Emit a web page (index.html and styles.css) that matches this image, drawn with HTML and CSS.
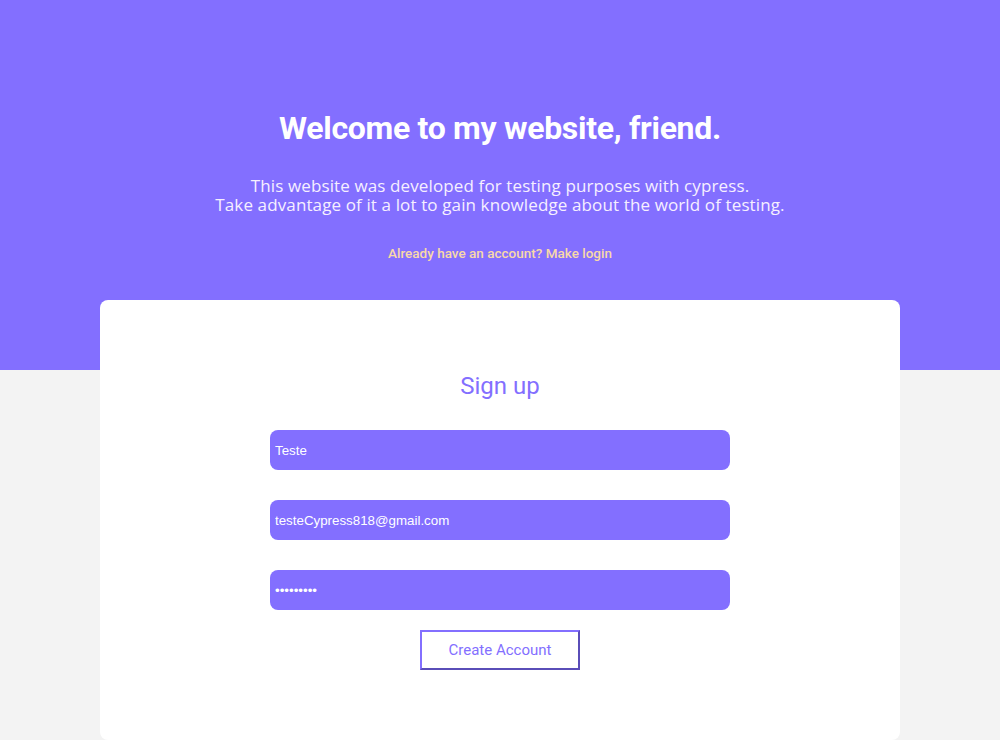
FILE: index.html
```html
<!DOCTYPE html>
<html lang="en">
<head>
<meta charset="utf-8">
<title>Sign up</title>
<link rel="stylesheet" href="styles.css">
</head>
<body>
<header class="hero">
  <h1 class="hero-title">Welcome to my website, friend.</h1>
  <p class="hero-text">This website was developed for testing purposes with cypress.<br>Take advantage of it a lot to gain knowledge about the world of testing.</p>
  <a class="hero-link" href="#">Already have an account? Make login</a>
</header>
<main class="card">
  <h2 class="card-title">Sign up</h2>
  <form class="form">
    <input class="field" type="text" value="Teste">
    <input class="field" type="email" value="testeCypress818@gmail.com">
    <input class="field" type="password" value="123456789">
    <button class="btn" type="button">Create Account</button>
  </form>
</main>
</body>
</html>
```
FILE: styles.css
```css
html, body {
  margin: 0;
  padding: 0;
}
body {
  background: #f3f3f3;
  font-family: Roboto, "Liberation Sans", sans-serif;
}
.hero {
  background: #836fff;
  height: 370px;
  box-sizing: border-box;
  padding-top: 109px;
  display: flex;
  flex-direction: column;
  align-items: center;
  text-align: center;
}
.hero-title {
  margin: 0;
  font-family: Roboto, sans-serif;
  font-weight: 700;
  font-size: 32px;
  line-height: 38px;
  color: #ffffff;
  letter-spacing: -0.3px;
}
.hero-text {
  margin: 29px 0 0;
  font-family: "Open Sans", sans-serif;
  font-size: 17px;
  line-height: 19px;
  letter-spacing: 0.12px;
  color: #f6efff;
}
.hero-link {
  margin-top: 31px;
  font-family: Roboto, sans-serif;
  font-weight: 500;
  font-size: 13.5px;
  line-height: 16px;
  color: #f8d9a8;
  text-decoration: none;
}
.card {
  width: 800px;
  height: 440px;
  box-sizing: border-box;
  margin: -70px auto 0;
  background: #ffffff;
  border-radius: 8px;
  padding-top: 72px;
  display: flex;
  flex-direction: column;
  align-items: center;
}
.card-title {
  margin: 0;
  font-family: Roboto, sans-serif;
  font-weight: 400;
  font-size: 24px;
  line-height: 28px;
  color: #836fff;
}
.form {
  margin-top: 30px;
  display: flex;
  flex-direction: column;
  align-items: center;
  gap: 30px;
}
.field {
  width: 460px;
  height: 40px;
  box-sizing: border-box;
  border: none;
  border-radius: 8px;
  background: #836fff;
  color: #ffffff;
  font-family: Arial, "Liberation Sans", sans-serif;
  font-size: 13.3333px;
  padding: 0 5px;
  outline: none;
}
.btn {
  margin-top: -10px;
  width: 160px;
  height: 40px;
  box-sizing: border-box;
  background: #ffffff;
  border: 2px solid;
  border-color: #836fff #5a4db8 #5a4db8 #836fff;
  color: #836fff;
  font-family: Roboto, sans-serif;
  font-size: 15px;
  cursor: pointer;
}
```
